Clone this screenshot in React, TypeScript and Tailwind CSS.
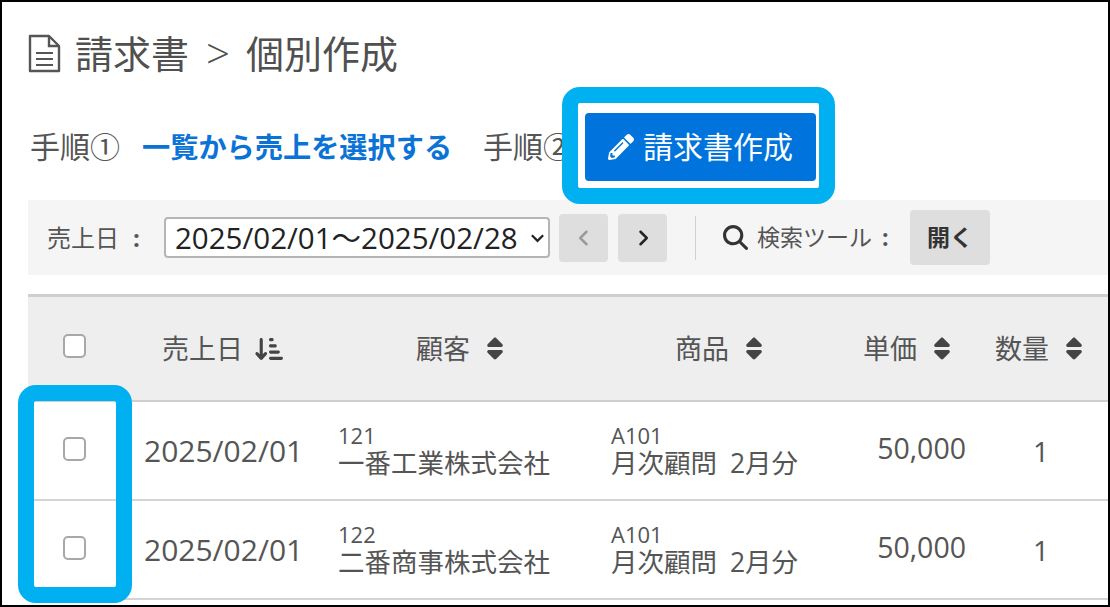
import { FaPencilAlt } from "react-icons/fa";
import {
  FaAngleLeft,
  FaAngleRight,
  FaArrowDownShortWide,
  FaMagnifyingGlass,
  FaSort,
} from "react-icons/fa6";

const rows = [
  { code: "121", customer: "一番工業株式会社" },
  { code: "122", customer: "二番商事株式会社" },
];

function CheckBox() {
  return <span className="block h-[24px] w-[23px] rounded-[5px] border-2 border-[#a8a8a8] bg-white" />;
}

function HeaderLabel({ label, pad }: { label: string; pad: string }) {
  return (
    <div className={`flex items-center gap-[14px] ${pad}`}>
      <span>{label}</span>
      <FaSort className="h-[25px] w-[22px] text-[#444]" />
    </div>
  );
}

function DocIcon() {
  return (
    <svg viewBox="0 0 33 39" className="mr-[14px] h-[39px] w-[33px]" fill="none" stroke="#555" strokeWidth="2.4">
      <path d="M2 2h19l10 10v25H2z" strokeLinejoin="round" />
      <path d="M21 2v10h10" />
      <path d="M8 19h17M8 25h17M8 31h17" strokeWidth="2" />
    </svg>
  );
}

export default function App() {
  return (
    <div className="relative box-border h-[607px] w-[1110px] overflow-hidden border-2 border-black bg-white pl-[26px] font-['Open_Sans','Noto_Sans_CJK_JP',sans-serif] text-[#555]">
      <header className="mt-[26px] flex h-[50px] items-center text-[38px] leading-none text-[#505050]">
        <DocIcon />
        <span>請求書</span>
        <span className="ml-[17px] text-[42px] font-light">&gt;</span>
        <span className="ml-[16px]">個別作成</span>
      </header>

      <div className="mt-[35px] flex h-[68px] items-center whitespace-nowrap text-[30px] leading-none">
        <span className="ml-[2px] w-[90px]">手順①</span>
        <span className="ml-[22px] w-[310px] text-[28.2px] font-bold text-[#0b73d6]">一覧から売上を選択する</span>
        <span className="ml-[31px] w-[90px]">手順②</span>
        <button
          type="button"
          className="ml-[12px] flex h-[68px] w-[231px] items-center justify-center gap-[9px] rounded-[4px] bg-[#0074dc] text-[30px] text-white"
        >
          <FaPencilAlt className="h-[26px] w-[26px]" />
          請求書作成
        </button>
      </div>

      <div className="mt-[19px] flex h-[75px] items-center bg-[#f5f5f5] pl-[19px] text-[24px] leading-none">
        <span className="w-[117px]">
          売上日<span className="ml-[14px] font-bold">:</span>
        </span>
        <div className="flex h-[41px] w-[386px] items-center justify-between rounded-[4px] border-2 border-[#b5b5b5] bg-white pl-[9px] pr-[3px] text-[29.5px] text-[#222]">
          <span>2025/02/01～2025/02/28</span>
          <svg viewBox="0 0 16 10" className="h-[10px] w-[15px]" fill="none" stroke="#222" strokeWidth="2.4">
            <path d="M2 2l6 6 6-6" />
          </svg>
        </div>
        <button type="button" className="ml-[9px] flex h-[48px] w-[49px] items-center justify-center rounded-[4px] bg-[#dedede] text-[#9a9a9a]">
          <FaAngleLeft className="h-[20px] w-[20px]" />
        </button>
        <button type="button" className="ml-[10px] flex h-[48px] w-[49px] items-center justify-center rounded-[4px] bg-[#dedede] text-[#222]">
          <FaAngleRight className="h-[20px] w-[20px]" />
        </button>
        <span className="ml-[28px] h-[44px] w-[1px] bg-[#d0d0d0]" />
        <FaMagnifyingGlass className="ml-[27px] h-[25px] w-[25px] text-[#333]" />
        <span className="ml-[9px] w-[144px] text-[23px]">
          検索ツール<span className="ml-[10px] font-bold">:</span>
        </span>
        <button type="button" className="ml-[9px] h-[55px] w-[80px] rounded-[4px] bg-[#dedede] text-[23px] font-semibold text-[#333]">
          開く
        </button>
      </div>

      <div className="mt-[19px] w-[1082px] text-[26.5px]">
        <div className="flex h-[108px] items-center border-t-[3px] border-b-[2px] border-[#cfcfcf] bg-[#eeeeee] text-[27px] leading-none">
          <div className="flex w-[92px] justify-center pb-[5px]">
            <CheckBox />
          </div>
          <div className="flex w-[194px] items-center gap-[12px] pl-[42px]">
            <span>売上日</span>
            <FaArrowDownShortWide className="h-[30px] w-[28px] text-[#444]" />
          </div>
          <div className="w-[273px]">
            <HeaderLabel label="顧客" pad="pl-[102px]" />
          </div>
          <div className="w-[253px]">
            <HeaderLabel label="商品" pad="pl-[88px]" />
          </div>
          <div className="w-[150px]">
            <HeaderLabel label="単価" pad="pl-[23px]" />
          </div>
          <div className="w-[102px]">
            <HeaderLabel label="数量" pad="pl-[5px]" />
          </div>
        </div>

        {rows.map((row) => (
          <div key={row.code} className="flex h-[99px] items-center border-b-[2px] border-[#d4d4d4]">
            <div className="flex w-[92px] justify-center pb-[4px]">
              <CheckBox />
            </div>
            <div className="w-[194px] pl-[24px] text-[30px] leading-none">2025/02/01</div>
            <div className="w-[273px] pb-[2px] pl-[24px]">
              <div className="text-[22px] leading-[26px]">{row.code}</div>
              <div className="leading-[30px]">{row.customer}</div>
            </div>
            <div className="w-[253px] pb-[2px] pl-[24px]">
              <div className="text-[22px] leading-[26px]">A101</div>
              <div className="leading-[30px] [word-spacing:6px]">月次顧問 2月分</div>
            </div>
            <div className="w-[150px] pb-[5px] pr-[24px] text-right text-[28.5px] leading-none">50,000</div>
            <div className="w-[102px] text-center text-[28px] leading-none">1</div>
          </div>
        ))}
      </div>

      <div className="absolute left-[560px] top-[85px] h-[117px] w-[273px] rounded-[18px] border-[16px] border-[#00b0f0]" />
      <div className="absolute left-[16px] top-[383px] h-[218px] w-[114px] rounded-[18px] border-[16px] border-[#00b0f0]" />
    </div>
  );
}
